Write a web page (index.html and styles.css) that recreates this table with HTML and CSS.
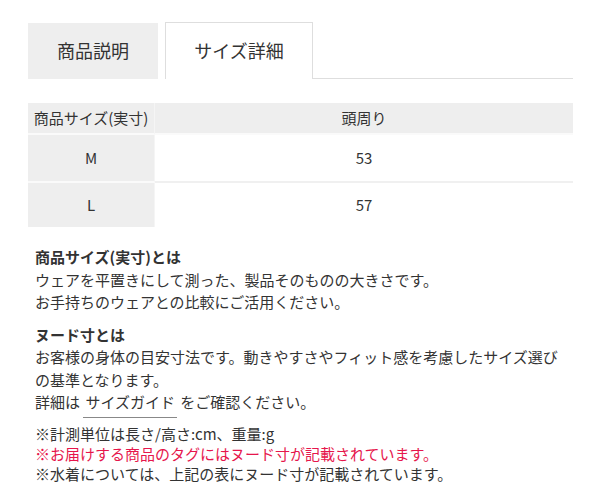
FILE: index.html
```html
<!DOCTYPE html>
<html lang="ja">
<head>
<meta charset="utf-8">
<link rel="stylesheet" href="styles.css">
</head>
<body>
<div class="wrap">
  <div class="tabs">
    <div class="tab tab-off">商品説明</div>
    <div class="tab tab-on">サイズ詳細</div>
    <div class="tab-fill"></div>
  </div>
  <table class="size">
    <thead>
      <tr><th class="c1">商品サイズ(実寸)</th><th>頭周り</th></tr>
    </thead>
    <tbody>
      <tr><td class="c1">M</td><td>53</td></tr>
      <tr><td class="c1">L</td><td>57</td></tr>
    </tbody>
  </table>
  <div class="info">
    <div class="block">
      <p class="ttl">商品サイズ(実寸)とは</p>
      <p>ウェアを平置きにして測った、製品そのものの大きさです。<br>お手持ちのウェアとの比較にご活用ください。</p>
    </div>
    <div class="block">
      <p class="ttl">ヌード寸とは</p>
      <p>お客様の身体の目安寸法です。動きやすさやフィット感を考慮したサイズ選びの基準となります。<br>詳細は <a class="guide" href="#">サイズガイド</a> をご確認ください。</p>
    </div>
    <div class="notes">
      <p>※計測単位は長さ/高さ:cm、重量:g</p>
      <p class="red">※お届けする商品のタグにはヌード寸が記載されています。</p>
      <p>※水着については、上記の表にヌード寸が記載されています。</p>
    </div>
  </div>
</div>
</body>
</html>
```
FILE: styles.css
```css
* { box-sizing: border-box; }
body {
  margin: 0;
  background: #fff;
  color: #333;
  font-family: "Noto Sans CJK JP", "Noto Sans", sans-serif;
}
.wrap {
  padding: 22px 0 0 28px;
  width: 600px;
}
.tabs {
  display: flex;
  align-items: flex-end;
  width: 545px;
}
.tab {
  font-size: 18px;
  display: flex;
  align-items: center;
  justify-content: center;
  color: #333;
}
.tab-off {
  width: 130px;
  height: 56px;
  background: #eeeeee;
  margin-right: 7px;
  padding-bottom: 2px;
}
.tab-on {
  width: 148px;
  height: 57px;
  background: #fff;
  border: 1px solid #dedede;
  border-bottom: none;
  padding-bottom: 2px;
}
.tab-fill {
  flex: 1;
  border-bottom: 1px solid #dedede;
  height: 1px;
}
.size {
  margin-top: 24px;
  width: 545px;
  border-collapse: separate;
  border-spacing: 0;
  font-size: 15px;
  line-height: 20px;
}
.size th, .size td {
  font-weight: normal;
  text-align: center;
}
.size th {
  padding: 5px 0;
  background: #eeeeee;
  border-bottom: 2px solid #fafafa;
}
.size td {
  padding: 13px 0;
  border-bottom: 2px solid #f0f0f0;
}
.size tbody tr:last-child td { border-bottom: none; padding: 12px 0; }
.size .c1 {
  width: 127px;
  background: #eeeeee;
  border-right: 1px solid #f5f5f5;
}
.size tbody .c1 { border-bottom-color: #fafafa; }
.info {
  margin: 19px 0 0 7px;
  width: 533px;
  font-size: 15px;
}
.info p { margin: 0; }
.block { line-height: 22.5px; margin-bottom: 10px; }
.ttl { font-weight: bold; }
.guide {
  color: #333;
  text-decoration: none;
  border-bottom: 1px solid #888;
  padding: 0 2px 5px;
}
.notes { margin-top: 10px; line-height: 20px; }
.red { color: #e6164c; }
```
